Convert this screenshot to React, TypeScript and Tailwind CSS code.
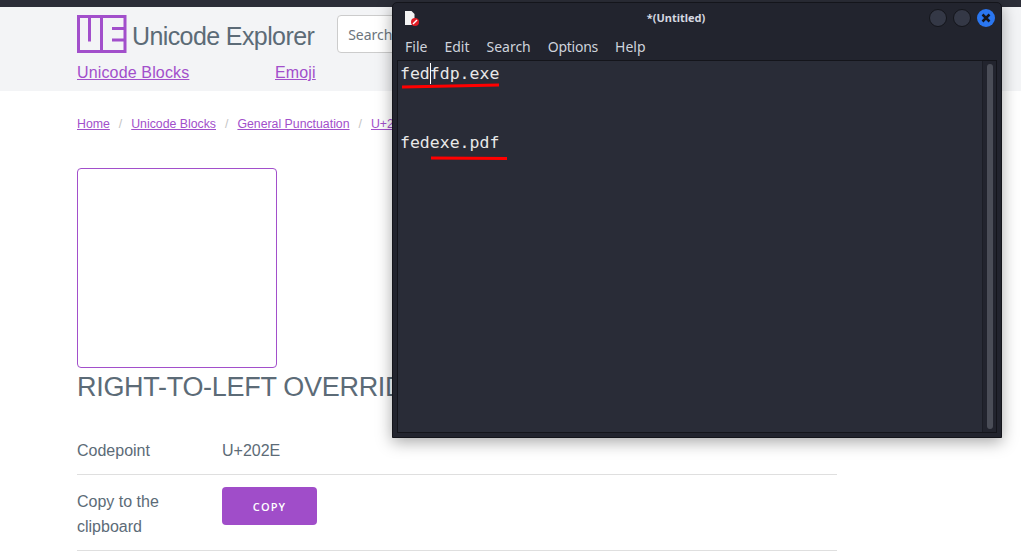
const purple = "text-[#a24fcb]";

function Logo() {
  return (
    <svg width="50" height="38" viewBox="0 0 50 38" className="shrink-0">
      <g fill="none" stroke="#a24fcb" strokeWidth="3">
        <rect x="1.500" y="1.500" width="46.500" height="35" />
        <path d="M12.500 1v25.500" />
        <path d="M24.500 1v36" />
        <path d="M35 13.500h13M35 25h13" />
      </g>
    </svg>
  );
}

function Header() {
  return (
    <header className="bg-[#f3f4f6] h-[84px] pl-[77px] pt-2">
      <div className="flex items-center h-[38px]">
        <Logo />
        <span className="ml-[5px] mt-[4px] text-[25px] leading-none text-[#5c6b77] tracking-[-0.6px]">Unicode Explorer</span>
        <input
          placeholder="Search for a character"
          className="ml-[23px] w-[300px] h-[38px] rounded border border-[#ccc] bg-white pl-[10px] text-[14px] placeholder:text-[#6c757d] font-['Noto_Sans',sans-serif]"
        />
      </div>
      <nav className={`flex mt-[8px] text-[16px] leading-[24px] ${purple}`}>
        <a href="#" className="underline w-[198px] tracking-[0.15px]">Unicode Blocks</a>
        <a href="#" className="underline tracking-[0.15px]">Emoji</a>
      </nav>
    </header>
  );
}

function Breadcrumbs() {
  return (
    <div className={`flex items-center h-[18px] text-[12.300px] ${purple} whitespace-nowrap`}>
      <a href="#" className="underline">Home</a>
      <span className="mx-[9px] text-[#c4c4c4]">/</span>
      <a href="#" className="underline">Unicode Blocks</a>
      <span className="mx-[9px] text-[#c4c4c4]">/</span>
      <a href="#" className="underline">General Punctuation</a>
      <span className="mx-[9px] text-[#c4c4c4]">/</span>
      <a href="#" className="underline">U+202E</a>
    </div>
  );
}

function Details() {
  return (
    <main className="pl-[77px] w-[837px] pt-[24px]">
      <Breadcrumbs />
      <div className="mt-[35px] w-[200px] h-[200px] border border-[#a24fcb] rounded" />
      <h1 className="text-[27px] leading-[38px] text-[#5c6b77] tracking-[-0.3px] whitespace-nowrap">RIGHT-TO-LEFT OVERRIDE</h1>
      <div className="mt-[26px] text-[16px] leading-[25px] text-[#5c6b77]">
        <div className="flex border-b border-[#dfdfdf] pt-[6px] h-[43px]">
          <div className="w-[145px]">Codepoint</div>
          <div>U+202E</div>
        </div>
        <div className="flex items-start border-b border-[#dfdfdf] h-[76px] pt-[12px]">
          <div className="w-[145px] pr-8 pt-[2px]">Copy to the clipboard</div>
          <button className="w-[95px] h-[38px] bg-[#a04dc9] rounded text-white text-[11px] font-semibold tracking-[1.1px] font-['Open_Sans',sans-serif]">COPY</button>
        </div>
      </div>
    </main>
  );
}

function EditorWindow() {
  return (
    <div className="absolute left-[392px] top-[2px] w-[610px] h-[436px] bg-[#22242e] rounded-t-[5px] border border-[#14151b] shadow-[0_4px_16px_rgba(0,0,0,0.35)] flex flex-col font-['Noto_Sans',sans-serif]">
      <div className="h-[30px] shrink-0 flex items-center relative">
        <svg width="16" height="16" viewBox="0 0 16 16" className="ml-[11px]">
          <path d="M1 1h6.500l3 3v11H1z" fill="#f4f4f4" />
          <circle cx="11" cy="12" r="4" fill="#e01b24" />
          <path d="M9 14l4-4" stroke="#fff" strokeWidth="1.500" />
        </svg>
        <span className="absolute left-0 right-[42px] text-center text-[11px] font-bold text-[#d5d8e0]">*(Untitled)</span>
        <div className="ml-auto mr-[6px] flex gap-[6px] relative">
          <span className="w-[18px] h-[18px] rounded-full bg-[#343846] border border-[#14151b]" />
          <span className="w-[18px] h-[18px] rounded-full bg-[#343846] border border-[#14151b]" />
          <span className="w-[18px] h-[18px] rounded-full bg-[#2a76f0] flex items-center justify-center">
            <svg width="10" height="10" viewBox="0 0 10 10"><path d="M1.500 1.500l7 7M8.500 1.500l-7 7" stroke="#14151b" strokeWidth="2.500" /></svg>
          </span>
        </div>
      </div>
      <div className="h-[27px] shrink-0 flex items-center pl-[12px] gap-[17px] text-[14px] text-[#cfd3dc]">
        <span>File</span><span>Edit</span><span>Search</span><span className="tracking-[-0.25px]">Options</span><span>Help</span>
      </div>
      <div className="flex-1 mx-[4px] mb-[4px] border border-[#14151b] bg-[#292c37] flex relative">
        <div className="flex-1 pl-[3px] font-['DejaVu_Sans_Mono',monospace] text-[16.500px] leading-[23px] text-[#e8e8e8] pt-[1px]">
          <div className="relative -ml-[1px]">fedfdp.exe<span className="absolute left-[30px] top-[1px] h-[21px] w-px bg-white" /></div>
          <div className="mt-[46px] -ml-[1px]">fedexe.pdf</div>
        </div>
        <div className="w-[14px] border-l border-[#1b1d25] bg-[#22242e] flex justify-center py-[3px]">
          <div className="w-[6px] h-full rounded-full bg-[#4a4d57]" />
        </div>
        {/* red marker strokes */}
        <svg className="absolute left-0 top-0 pointer-events-none" width="120" height="110">
          <path d="M4 26l97-2" stroke="#f00" strokeWidth="3" fill="none" />
          <path d="M33 97l76 .5" stroke="#f00" strokeWidth="3" fill="none" />
        </svg>
      </div>
    </div>
  );
}

export default function App() {
  return (
    <div className="relative w-[1021px] h-[551px] overflow-hidden bg-white font-['Liberation_Sans',sans-serif]">
      <div className="h-[7px] bg-[#2c2e38]" />
      <Header />
      <Details />
      <EditorWindow />
    </div>
  );
}
